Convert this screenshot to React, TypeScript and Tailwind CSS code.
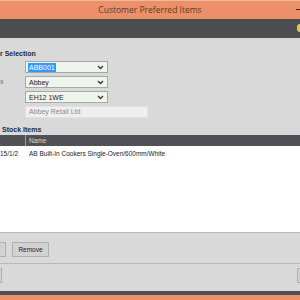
import { FC } from "react"

const font = { fontFamily: '"Liberation Sans", Arial, sans-serif' }

const Chevron: FC = () => (
  <svg width="7" height="5" viewBox="0 0 7 5" className="shrink-0">
    <path d="M1 1 L3.5 3.5 L6 1" stroke="#333" strokeWidth="1.3" fill="none" />
  </svg>
)

const Combo: FC<{ value: string; selected?: boolean }> = ({ value, selected }) => (
  <div className="flex items-center justify-between w-[83px] h-[12px] border border-[#a8a8a8] bg-[#eef6ec] pl-[2px] pr-[3px]">
    <span
      className={`text-[7px] leading-[9px] px-[1px] ${
        selected ? "bg-[#3399ff] text-white" : "text-[#222]"
      }`}
    >
      {value}
    </span>
    <Chevron />
  </div>
)

export default function App() {
  return (
    <div className="w-[300px] h-[300px] flex flex-col overflow-hidden bg-[#d9d9d9]" style={font}>
      <div className="relative h-[19px] shrink-0 bg-[#eb9068] border-t border-[#f3b89c] flex items-center justify-center">
        <span className="text-[8.5px] text-[#5b3b2b]" style={{ fontFamily: '"Open Sans", sans-serif' }}>
          Customer Preferred Items
        </span>
        <div className="absolute right-0 top-[8px] w-[4px] h-[1px] bg-[#3a2a20]" />
      </div>
      <div className="relative h-[19px] shrink-0 bg-[#4c4e52]">
        <div className="absolute right-0 top-[5px] w-[3px] h-[8px] rounded-l-full bg-[#e8c84a]" />
      </div>

      <div className="flex-1 flex flex-col">
        <div className="pt-[11px] h-[23px] text-[7px] font-bold text-[#1e2a38]">r Selection</div>
        <div className="flex flex-col gap-[3px] pl-[25px]">
          <Combo value="ABB001" selected />
          <div className="relative">
            <span className="absolute left-[-25px] top-[1px] text-[7px] text-[#4a6a9a]">x</span>
            <Combo value="Abbey" />
          </div>
          <Combo value="EH12 1WE" />
          <div className="w-[123px] h-[12px] border border-[#e2e2e2] bg-[#efefef] text-[7px] leading-[10px] text-[#8a8a8a] pl-[3px]">
            Abbey Retail Ltd
          </div>
        </div>
        <div className="pl-[2px] pt-[7px] h-[17px] text-[7px] font-bold text-[#1e2a38]">Stock Items</div>

        <div className="flex flex-col h-[98px] bg-white border-b border-[#b8b8b8]">
          <div className="flex items-center h-[11px] bg-[#4f5154] text-[6.5px] text-[#d8d8d8]">
            <div className="w-[26px] h-full border-r border-[#9a9a9a]" />
            <span className="pl-[3px]">Name</span>
          </div>
          <div className="flex items-center h-[13px] text-[6.5px] text-[#222] mt-[1px]">
            <span className="w-[29px]">15/1/2</span>
            <span>AB Built-In Cookers Single-Oven/600mm/White</span>
          </div>
        </div>

        <div className="flex items-start gap-[6px] h-[31px] pt-[9px] border-b border-[#b8b8b8]">
          <div className="w-[6px] h-[15px] border border-l-0 border-[#b0b0b0] bg-[#d2d2d2]" />
          <div className="w-[37px] h-[15px] border border-[#b0b0b0] bg-[#d2d2d2] flex items-center justify-center text-[6.5px] text-[#222]">
            Remove
          </div>
        </div>

        <div className="flex-1 flex justify-between items-start pt-[4px]">
          <div className="w-[2px] h-[15px] border border-l-0 border-[#b0b0b0] bg-[#d2d2d2]" />
          <div className="w-[3px] h-[15px] border border-r-0 border-[#b0b0b0] bg-[#d2d2d2]" />
        </div>
      </div>

      <div className="h-[4px] shrink-0 bg-[#4c4e52]" />
      <div className="h-[5px] shrink-0 bg-[#eb9068]" />
    </div>
  )
}
